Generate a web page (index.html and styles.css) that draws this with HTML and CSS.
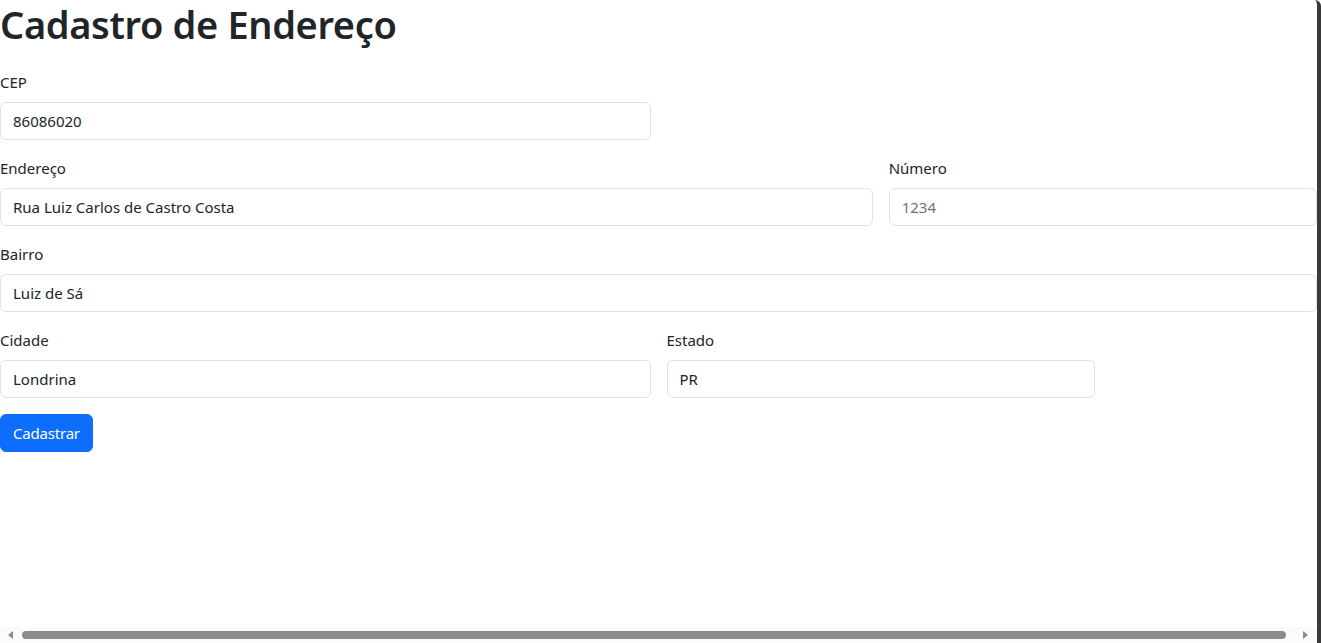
FILE: index.html
```html
<!DOCTYPE html>
<html lang="pt-BR">
<head>
<meta charset="utf-8">
<title>Cadastro de Endereço</title>
<link rel="stylesheet" href="styles.css">
</head>
<body>
<div class="frame">
  <main class="page">
    <h1 class="title">Cadastro de Endereço</h1>
    <form class="form">
      <div class="field span-6">
        <label class="label" for="cep">CEP</label>
        <input class="input" id="cep" type="text" value="86086020">
      </div>
      <div class="field span-6 empty"></div>
      <div class="field span-8">
        <label class="label" for="end">Endereço</label>
        <input class="input" id="end" type="text" value="Rua Luiz Carlos de Castro Costa">
      </div>
      <div class="field span-4">
        <label class="label" for="num">Número</label>
        <input class="input" id="num" type="text" placeholder="1234">
      </div>
      <div class="field span-12">
        <label class="label" for="bairro">Bairro</label>
        <input class="input" id="bairro" type="text" value="Luiz de Sá">
      </div>
      <div class="field span-6">
        <label class="label" for="cidade">Cidade</label>
        <input class="input" id="cidade" type="text" value="Londrina">
      </div>
      <div class="field span-4">
        <label class="label" for="uf">Estado</label>
        <input class="input" id="uf" type="text" value="PR">
      </div>
      <div class="field span-12">
        <button class="btn" type="button">Cadastrar</button>
      </div>
    </form>
  </main>
  <div class="hscroll" aria-hidden="true">
    <span class="arrow left"></span>
    <span class="thumb"></span>
    <span class="arrow right"></span>
  </div>
</div>
</body>
</html>
```

FILE: styles.css
```css
* { box-sizing: border-box; }
html, body { margin: 0; padding: 0; height: 100%; background: #ffffff; overflow: hidden; }
body {
  font-family: "Noto Sans", "Open Sans", sans-serif;
  font-size: 16px;
  line-height: 1.5;
  color: #212529;
}
.frame {
  width: 1321px;
  height: 643px;
  border-right: 4px solid #3a3a3a;
  border-top-right-radius: 6px;
  position: relative;
  overflow: hidden;
}
.page { width: 1317px; }
.title {
  margin: 0;
  padding-top: 1px;
  font-size: 38px;
  font-weight: 600;
  line-height: 47px;
  letter-spacing: -0.35px;
}
.form {
  margin-top: 22px;
  display: grid;
  grid-template-columns: repeat(12, 1fr);
  column-gap: 16px;
  row-gap: 16px;
}
.field { display: flex; flex-direction: column; }
.span-4 { grid-column: span 4; }
.span-6 { grid-column: span 6; }
.span-8 { grid-column: span 8; }
.span-12 { grid-column: span 12; }
.empty { display: none; }
.span-6 + .empty { display: block; }
.label {
  display: block;
  margin-bottom: 8px;
  font-size: 15px;
  line-height: 24px;
}
.input {
  display: block;
  width: 100%;
  height: 38px;
  padding: 6px 12px;
  font-family: inherit;
  font-size: 15px;
  line-height: 24px;
  color: #212529;
  background: #fff;
  border: 1px solid #dee2e6;
  border-radius: 6px;
  outline: none;
}
.input::placeholder { color: #6c757d; opacity: 1; }
.btn {
  align-self: flex-start;
  height: 38px;
  padding: 6px 12px;
  font-family: inherit;
  font-size: 15px;
  line-height: 24px;
  letter-spacing: -0.2px;
  color: #fff;
  background: #0d6efd;
  border: 1px solid #0d6efd;
  border-radius: 6px;
}
.hscroll {
  position: absolute;
  left: 0;
  bottom: 0;
  width: 1317px;
  height: 16px;
  background: #fbfbfb;
  display: flex;
  align-items: center;
  padding: 0 6px;
  gap: 9px;
}
.thumb {
  flex: 1;
  height: 8px;
  border-radius: 4px;
  background: #8b8b8b;
  margin: 0 8px 0 0;
}
.arrow { width: 0; height: 0; border-top: 4px solid transparent; border-bottom: 4px solid transparent; }
.arrow.left { border-right: 5px solid #8b8b8b; margin-left: 2px; }
.arrow.right { border-left: 5px solid #8b8b8b; margin-right: 3px; }
```
